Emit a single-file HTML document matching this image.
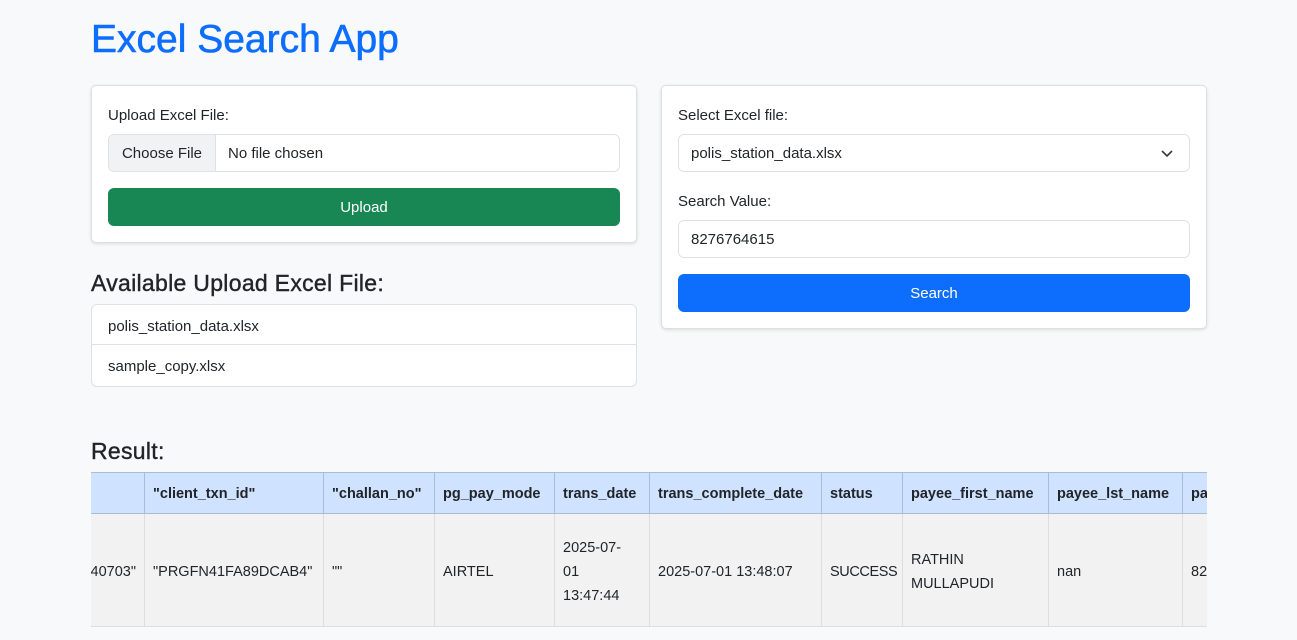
<!DOCTYPE html>
<html><head><meta charset="utf-8"><style>
*{box-sizing:border-box;margin:0;padding:0}
body{width:1297px;height:640px;overflow:hidden;background:#f8f9fa;font-family:"Liberation Sans",sans-serif;color:#212529;font-size:15px;position:relative}
.a{position:absolute}
h1{position:absolute;left:91px;top:18px;font-size:39px;font-weight:500;color:#0d6efd;-webkit-text-stroke:0.6px #0d6efd}
.card{position:absolute;background:#fff;border:1px solid #dcdfe3;border-radius:5px;box-shadow:0 1px 3px rgba(0,0,0,.12)}
.inp{position:absolute;border:1px solid #dee2e6;border-radius:6px;background:#fff;height:38px;line-height:38px;padding-left:12px;font-size:15px}
.btn{position:absolute;border-radius:6px;color:#fff;text-align:center;height:38px;line-height:40px;font-size:15px}
.lbl{position:absolute;font-size:15px}
h4{position:absolute;font-size:23px;font-weight:500;-webkit-text-stroke:0.4px #212529;letter-spacing:0.3px}
.li{position:absolute;left:91px;width:546px;height:41px;border:1px solid #dee2e6;background:#fff;padding-left:16px;line-height:43px;font-size:15px}
.tbl{position:absolute;left:91px;top:472px;width:1116px;height:155px;overflow:hidden}
.th,.td{position:absolute;padding-left:8px;font-size:14.5px;white-space:nowrap}
.th{top:0;height:42px;line-height:43px;background:#cfe2ff;border-right:1px solid #a9bbd6;border-top:1px solid #a9bbd6;border-bottom:1px solid #a9bbd6;font-weight:bold}
.td{top:42px;height:113px;background:#f2f2f2;border-right:1px solid #dedede;border-bottom:1px solid #dedede;display:flex;align-items:center;line-height:24px;padding-top:3px}
</style></head><body>
<h1>Excel Search App</h1>
<div class="card" style="left:91px;top:85px;width:546px;height:158px"></div>
<div class="lbl" style="left:108px;top:107px">Upload Excel File:</div>
<div class="inp" style="left:108px;top:134px;width:512px;padding-left:0"><span style="display:inline-block;width:107px;background:#f1f2f3;border-right:1px solid #dee2e6;text-align:center;height:36px;border-radius:6px 0 0 6px">Choose File</span><span style="padding-left:12px">No file chosen</span></div>
<div class="btn" style="left:108px;top:188px;width:512px;background:#198754">Upload</div>
<h4 style="left:91px;top:270px">Available Upload Excel File:</h4>
<div class="li" style="top:304px;border-radius:6px 6px 0 0">polis_station_data.xlsx</div>
<div class="li" style="top:345px;border-top:none;height:42px;border-radius:0 0 6px 6px">sample_copy.xlsx</div>
<div class="card" style="left:661px;top:85px;width:546px;height:244px"></div>
<div class="lbl" style="left:678px;top:107px">Select Excel file:</div>
<div class="inp" style="left:678px;top:134px;width:512px">polis_station_data.xlsx<svg class="a" style="right:16px;top:14px" width="12" height="9" viewBox="0 0 12 9"><path d="M1 2l5 5 5-5" fill="none" stroke="#343a40" stroke-width="1.6"/></svg></div>
<div class="lbl" style="left:678px;top:193px">Search Value:</div>
<div class="inp" style="left:678px;top:220px;width:512px">8276764615</div>
<div class="btn" style="left:678px;top:274px;width:512px;background:#0d6efd">Search</div>
<h4 style="left:91px;top:438px">Result:</h4>
<div class="tbl">
<div class="th" style="left:0;width:54px"></div>
<div class="th" style="left:54px;width:179px">"client_txn_id"</div>
<div class="th" style="left:233px;width:111px">"challan_no"</div>
<div class="th" style="left:344px;width:120px">pg_pay_mode</div>
<div class="th" style="left:464px;width:95px">trans_date</div>
<div class="th" style="left:559px;width:172px">trans_complete_date</div>
<div class="th" style="left:731px;width:81px">status</div>
<div class="th" style="left:812px;width:146px">payee_first_name</div>
<div class="th" style="left:958px;width:134px">payee_lst_name</div>
<div class="th" style="left:1092px;width:60px">pa</div>
<div class="td" style="left:-8px;width:62px;justify-content:flex-end;padding-right:8px">40703"</div>
<div class="td" style="left:54px;width:179px">"PRGFN41FA89DCAB4"</div>
<div class="td" style="left:233px;width:111px">""</div>
<div class="td" style="left:344px;width:120px">AIRTEL</div>
<div class="td" style="left:464px;width:95px">2025-07-<br>01<br>13:47:44</div>
<div class="td" style="left:559px;width:172px">2025-07-01 13:48:07</div>
<div class="td" style="left:731px;width:81px;letter-spacing:-0.4px">SUCCESS</div>
<div class="td" style="left:812px;width:146px">RATHIN<br>MULLAPUDI</div>
<div class="td" style="left:958px;width:134px">nan</div>
<div class="td" style="left:1092px;width:60px">8276764615</div>
</div>
</body></html>
